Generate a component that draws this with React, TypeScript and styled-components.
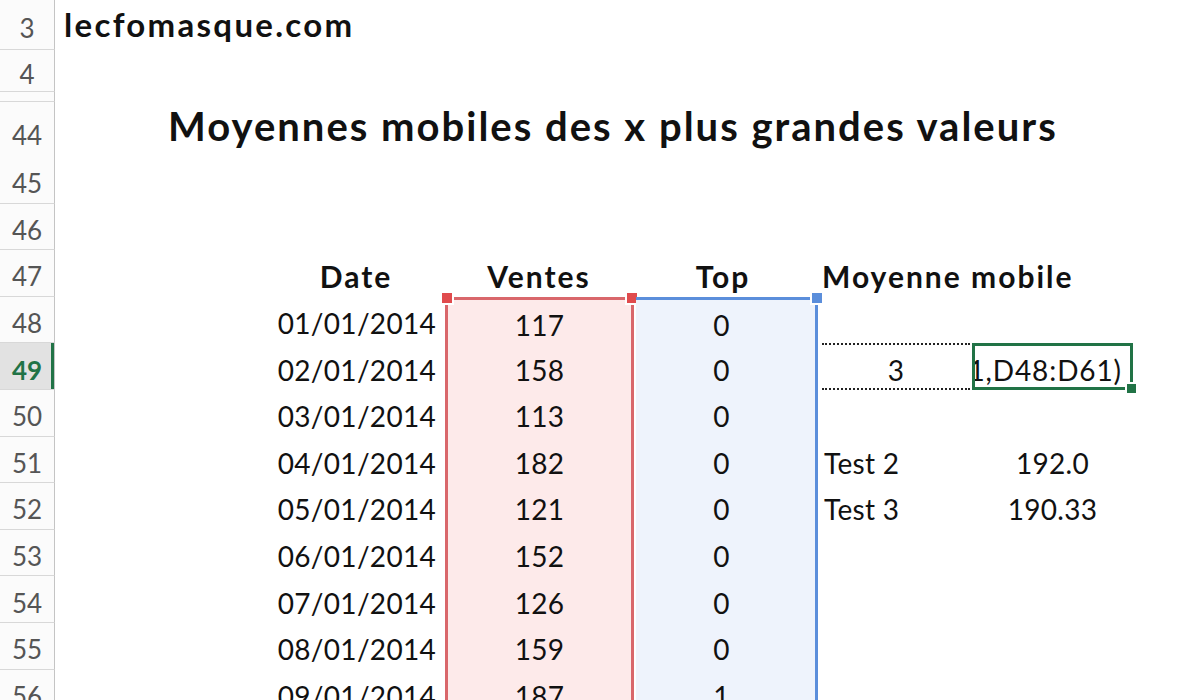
import React from "react";
import styled, { createGlobalStyle, css } from "styled-components";

const GlobalStyle = createGlobalStyle`
  html, body { margin: 0; padding: 0; background: #ffffff; overflow: hidden; }
  body { font-family: Lato, "Open Sans", "Liberation Sans", sans-serif; color: #111; }
`;

const COLS = "55px 215px 172px 194px 184px 152px 161px 1fr";
const GREEN = "#217346";
const RED = "#d9676b";
const RED_HANDLE = "#e04b4d";
const PINK = "#fdeaea";
const BLUE = "#5b8edb";
const BLUE_FILL = "#eef3fc";

const Sheet = styled.div`
  display: flex;
  flex-direction: column;
  width: 1200px;
  height: 700px;
  overflow: hidden;
`;

const Row = styled.div<{ $h: number }>`
  display: grid;
  grid-template-columns: ${COLS};
  height: ${(p) => p.$h}px;
  flex: none;
`;

const RowHeader = styled.div<{ $active?: boolean }>`
  box-sizing: border-box;
  display: flex;
  align-items: center;
  justify-content: center;
  padding-top: 7px;
  font-size: 26px;
  background: ${(p) => (p.$active ? "#e2e2e2" : "#fbfbfb")};
  color: ${(p) => (p.$active ? GREEN : "#555")};
  font-weight: ${(p) => (p.$active ? 700 : 400)};
  border-right: 1px solid #c4c4c4;
  border-bottom: 1px solid #d8d8d8;
  ${(p) =>
    p.$active &&
    css`
      box-shadow: inset -3px 0 0 ${GREEN};
    `}
`;

const Cell = styled.div<{ $align?: "left" | "center" | "right"; $shift?: number }>`
  box-sizing: border-box;
  display: flex;
  align-items: center;
  justify-content: ${(p) =>
    p.$align === "left" ? "flex-start" : p.$align === "right" ? "flex-end" : "center"};
  padding-top: 6px;
  padding-left: ${(p) => (p.$align === "left" ? "4px" : "0")};
  padding-right: ${(p) => (p.$align === "right" ? "6px" : `${p.$shift ?? 0}px`)};
  font-size: 28px;
  letter-spacing: 0.3px;
  white-space: nowrap;
  min-width: 0;
`;

const HeadCell = styled(Cell)`
  font-size: 30px;
  font-weight: 700;
  letter-spacing: 2px;
  padding-left: ${(p) => (p.$align === "left" ? "2px" : "0")};
`;

const Site = styled.div`
  grid-column: 2 / -1;
  display: flex;
  align-items: flex-end;
  padding-left: 9px;
  padding-bottom: 6px;
  font-size: 33px;
  font-weight: 700;
  letter-spacing: 2.3px;
  color: #111;
  white-space: nowrap;
`;

const Title = styled.div`
  grid-column: 2 / -1;
  display: flex;
  align-items: flex-end;
  padding-left: 113px;
  padding-bottom: 11px;
  font-size: 40px;
  font-weight: 700;
  letter-spacing: 2px;
  color: #111;
  white-space: nowrap;
`;

const RangeCell = styled.div<{ $tone: "red" | "blue"; $first?: boolean }>`
  position: relative;
  box-sizing: border-box;
  display: flex;
  align-items: center;
  justify-content: center;
  padding-top: 6px;
  font-size: 28px;
  letter-spacing: 0.3px;
  ${(p) =>
    p.$tone === "red"
      ? css`
          margin: 0 2px 0 3px;
          background: ${PINK};
          border-left: 3px solid ${RED};
          border-right: 3px solid ${RED};
          ${p.$first && css`border-top: 3px solid ${RED};`}
        `
      : css`
          margin: 0 2px 0 0;
          padding-right: 8px;
          background: ${BLUE_FILL};
          border-right: 3px solid ${BLUE};
          ${p.$first && css`border-top: 3px solid ${BLUE};`}
        `}
`;

const Handle = styled.span<{ $color: string; $side: "left" | "right"; $offset: number }>`
  position: absolute;
  top: -9px;
  ${(p) => p.$side}: ${(p) => p.$offset}px;
  width: 10px;
  height: 10px;
  background: ${(p) => p.$color};
  border: 2px solid #ffffff;
`;

const DottedCell = styled(Cell)`
  margin: 0 2px;
  border-top: 2px dotted #222;
  border-bottom: 2px dotted #222;
`;

const ActiveCell = styled.div`
  position: relative;
  box-sizing: border-box;
  display: flex;
  align-items: center;
  padding: 6px 8px 0 0;
  border: 3px solid ${GREEN};
  font-size: 28px;
  white-space: nowrap;
`;

const ActiveText = styled.div`
  flex: 1;
  min-width: 0;
  overflow: hidden;
  display: flex;
  justify-content: flex-end;
  letter-spacing: 0.9px;
`;

const FillHandle = styled.span`
  position: absolute;
  right: -8px;
  bottom: -8px;
  width: 9px;
  height: 9px;
  background: ${GREEN};
  border: 2px solid #ffffff;
`;

const dates = [
  "01/01/2014",
  "02/01/2014",
  "03/01/2014",
  "04/01/2014",
  "05/01/2014",
  "06/01/2014",
  "07/01/2014",
  "08/01/2014",
  "09/01/2014",
];
const ventes = [117, 158, 113, 182, 121, 152, 126, 159, 187];
const tops = [0, 0, 0, 0, 0, 0, 0, 0, 1];

const rows = dates.map((d, i) => ({
  n: 48 + i,
  date: d,
  ventes: ventes[i],
  top: tops[i],
}));

const H = 46.6;

export default function App() {
  return (
    <>
      <GlobalStyle />
      <Sheet>
        <Row $h={50}>
          <RowHeader>3</RowHeader>
          <Site>lecfomasque.com</Site>
        </Row>
        <Row $h={42}>
          <RowHeader>4</RowHeader>
        </Row>
        <Row $h={10}>
          <RowHeader />
        </Row>
        <Row $h={55}>
          <RowHeader>44</RowHeader>
          <Title>Moyennes mobiles des x plus grandes valeurs</Title>
        </Row>
        <Row $h={H}>
          <RowHeader>45</RowHeader>
        </Row>
        <Row $h={H}>
          <RowHeader>46</RowHeader>
        </Row>
        <Row $h={H}>
          <RowHeader>47</RowHeader>
          <Cell />
          <HeadCell>Date</HeadCell>
          <HeadCell>Ventes</HeadCell>
          <HeadCell $shift={10}>Top</HeadCell>
          <HeadCell $align="left">Moyenne mobile</HeadCell>
        </Row>
        {rows.map((r, i) => {
          const first = i === 0;
          return (
            <Row $h={H} key={r.n}>
              <RowHeader $active={r.n === 49}>{r.n}</RowHeader>
              <Cell />
              <Cell $align="right">{r.date}</Cell>
              <RangeCell $tone="red" $first={first}>
                {first && <Handle $color={RED_HANDLE} $side="left" $offset={-8} />}
                {first && <Handle $color={RED_HANDLE} $side="right" $offset={-8} />}
                {r.ventes}
              </RangeCell>
              <RangeCell $tone="blue" $first={first}>
                {first && <Handle $color={BLUE} $side="right" $offset={-9} />}
                {r.top}
              </RangeCell>
              {r.n === 49 && (
                <>
                  <DottedCell>3</DottedCell>
                  <ActiveCell>
                    <ActiveText>1,D48:D61)</ActiveText>
                    <FillHandle />
                  </ActiveCell>
                </>
              )}
              {r.n === 51 && (
                <>
                  <Cell $align="left">Test 2</Cell>
                  <Cell>192.0</Cell>
                </>
              )}
              {r.n === 52 && (
                <>
                  <Cell $align="left">Test 3</Cell>
                  <Cell>190.33</Cell>
                </>
              )}
            </Row>
          );
        })}
      </Sheet>
    </>
  );
}
